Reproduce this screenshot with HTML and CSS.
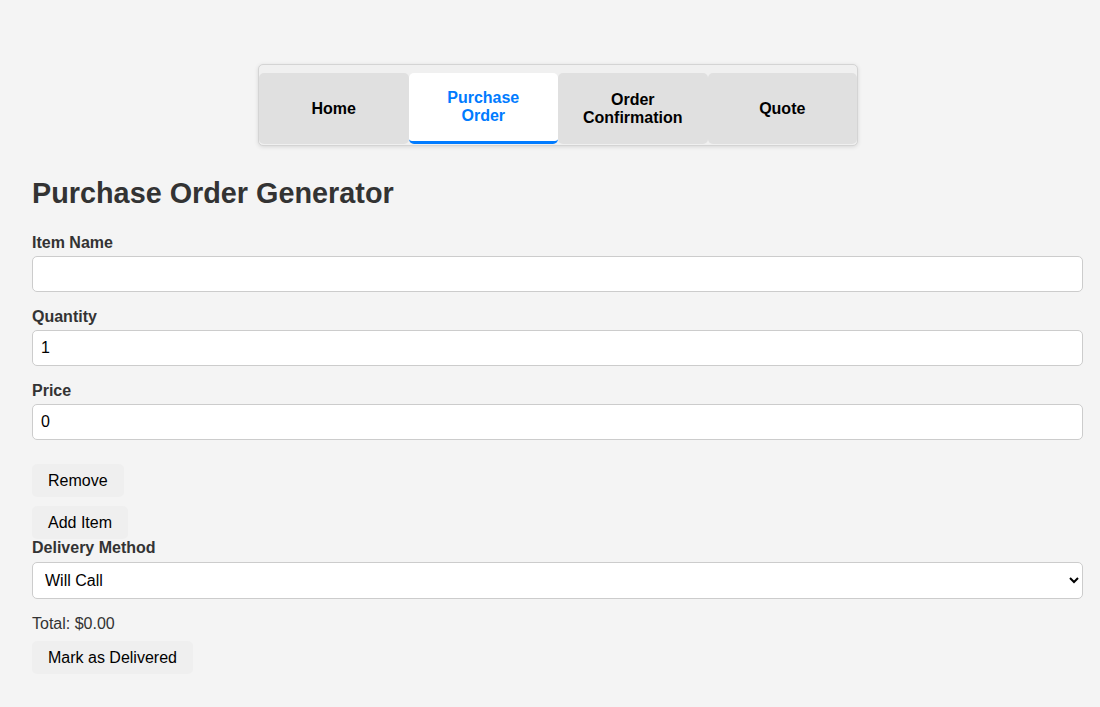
FILE: index.html
```html
<!DOCTYPE html>
<html lang="en">
<head>
<meta charset="utf-8">
<title>Purchase Order Generator</title>
<link rel="stylesheet" href="styles.css">
</head>
<body>
<header class="header">
  <nav class="tabs">
    <div class="tab">Home</div>
    <div class="tab active">Purchase<br>Order</div>
    <div class="tab">Order<br>Confirmation</div>
    <div class="tab">Quote</div>
  </nav>
</header>
<main class="page">
  <h1 class="title">Purchase Order Generator</h1>
  <div class="item">
    <div class="field">
      <label class="label">Item Name</label>
      <input class="input" type="text" value="">
    </div>
    <div class="field">
      <label class="label">Quantity</label>
      <input class="input" type="text" value="1">
    </div>
    <div class="field">
      <label class="label">Price</label>
      <input class="input" type="text" value="0">
    </div>
    <button class="btn btn-remove">Remove</button>
  </div>
  <button class="btn">Add Item</button>
  <label class="label label-delivery">Delivery Method</label>
  <select class="select">
    <option>Will Call</option>
  </select>
  <p class="total">Total: $0.00</p>
  <button class="btn">Mark as Delivered</button>
</main>
</body>
</html>
```
FILE: styles.css
```css
* { box-sizing: border-box; }
body {
  margin: 0;
  background: #f4f4f4;
  font-family: "Liberation Sans", Arial, sans-serif;
  color: #333;
  padding-top: 64px;
}
.header {
  padding-left: 16px;
}
.tabs {
  width: 600px;
  margin: 0 auto;
  display: flex;
  padding-top: 8px;
  padding-bottom: 1px;
  border: 1px solid #d4d4d4;
  border-radius: 5px;
  background: #f0f0f0;
  box-shadow: 0 1px 4px rgba(0,0,0,0.12);
}
.tab {
  flex: 1;
  height: 71px;
  display: flex;
  align-items: center;
  justify-content: center;
  text-align: center;
  font-weight: bold;
  font-size: 16px;
  line-height: 18px;
  color: #000;
  background: #e0e0e0;
  border-radius: 5px;
}
.tab.active {
  background: #fff;
  color: #007bff;
  border-bottom: 3px solid #007bff;
}
.page {
  padding: 0 17px 0 32px;
}
.title {
  font-size: 28.8px;
  line-height: 33px;
  margin: 31px 0 24px;
  color: #333;
}
.field { margin-bottom: 16px; }
.label {
  display: block;
  font-weight: bold;
  font-size: 16px;
  line-height: 18px;
  margin-bottom: 4px;
  color: #333;
}
.label-delivery {
  margin-bottom: 5px;
}
.input {
  display: block;
  width: 100%;
  height: 36px;
  padding: 8px;
  font: 16px "Liberation Sans", Arial, sans-serif;
  color: #000;
  background: #fff;
  border: 1px solid #ccc;
  border-radius: 5px;
}
.btn {
  display: block;
  font: 16px "Liberation Sans", Arial, sans-serif;
  line-height: 19px;
  padding: 7px 16px;
  background: #efefef;
  color: #000;
  border: none;
  border-radius: 5px;
}
.btn-remove {
  margin-top: 24px;
  margin-bottom: 9px;
}
.select {
  display: block;
  width: 100%;
  height: 37px;
  padding: 8px 8px;
  font: 16px "Liberation Sans", Arial, sans-serif;
  color: #000;
  background: #fff;
  border: 1px solid #ccc;
  border-radius: 5px;
}
.total {
  margin: 16px 0 8px;
  font-size: 16px;
  line-height: 18px;
  color: #333;
}
```
